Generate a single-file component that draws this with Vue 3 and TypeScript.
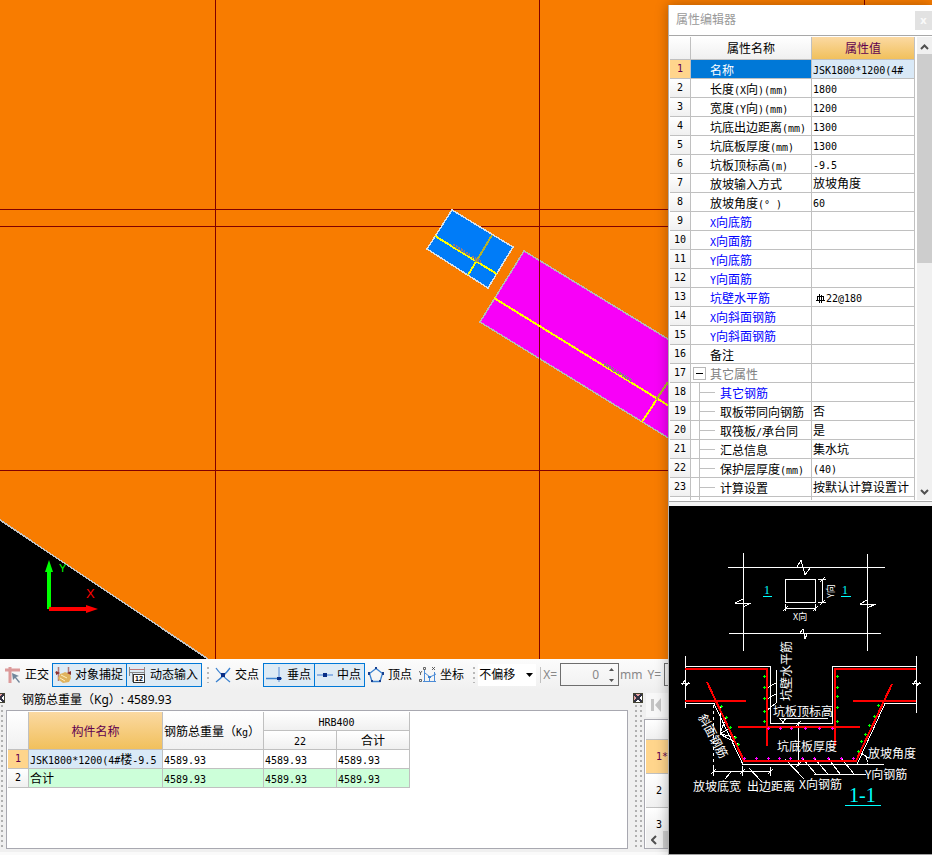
<script setup lang="ts">
import { ref } from 'vue'

type Kind = 'normal' | 'blue' | 'group' | 'child'
interface Prop { name: string; value: string; kind?: Kind; blue?: boolean; rebar?: boolean }
interface Run { text: string; mono: boolean }

const props: Prop[] = [
  { name: '名称', value: 'JSK1800*1200(4#' },
  { name: '长度(X向)(mm)', value: '1800' },
  { name: '宽度(Y向)(mm)', value: '1200' },
  { name: '坑底出边距离(mm)', value: '1300' },
  { name: '坑底板厚度(mm)', value: '1300' },
  { name: '坑板顶标高(m)', value: '-9.5' },
  { name: '放坡输入方式', value: '放坡角度' },
  { name: '放坡角度(° )', value: '60' },
  { name: 'X向底筋', value: '', blue: true },
  { name: 'X向面筋', value: '', blue: true },
  { name: 'Y向底筋', value: '', blue: true },
  { name: 'Y向面筋', value: '', blue: true },
  { name: '坑壁水平筋', value: '22@180', blue: true, rebar: true },
  { name: 'X向斜面钢筋', value: '', blue: true },
  { name: 'Y向斜面钢筋', value: '', blue: true },
  { name: '备注', value: '' },
  { name: '其它属性', value: '', kind: 'group' },
  { name: '其它钢筋', value: '', kind: 'child', blue: true },
  { name: '取板带同向钢筋', value: '否', kind: 'child' },
  { name: '取筏板/承台同', value: '是', kind: 'child' },
  { name: '汇总信息', value: '集水坑', kind: 'child' },
  { name: '保护层厚度(mm)', value: '(40)', kind: 'child' },
  { name: '计算设置', value: '按默认计算设置计', kind: 'child' },
]

// Half-width characters are set on a 6px grid next to 12px ideographs.
function runs(s: string): Run[] {
  const parts = s.match(/[\x20-\x7e°]+|[^\x20-\x7e°]+/g) ?? []
  return parts.map((text) => ({ text, mono: /^[\x20-\x7e°]/.test(text) }))
}

const snap = ref(true)
const dyn = ref(true)
const perp = ref(true)
const mid = ref(true)
const offset = ref('不偏移')
const dx = ref('0')

type Pt = [number, number]
const green: Pt[] = [
  [764, 676], [764, 687], [764, 698], [764, 711], [764, 721],
  [837, 676], [837, 687], [837, 696], [837, 707], [837, 721],
  [721, 706], [726, 717], [730, 727], [735, 737], [738, 744],
  [878, 705], [874, 716], [869, 725], [865, 734], [861, 741], [858, 751],
]
const magenta: Pt[] = [
  [768, 728], [780, 728], [791, 728], [805, 728], [819, 728], [832, 728],
  [744, 758], [756, 758], [768, 758], [779, 758], [790, 758], [802, 758],
  [814, 758], [828, 758], [841, 758], [853, 758],
]
const plus = (pts: Pt[]) => pts.map(([x, y]) => `M${x - 1} ${y + 0.5}h3M${x + 0.5} ${y - 1}v3`).join('')
</script>

<template>
  <div class="app">
    <svg class="canvas" viewBox="0 0 932 659" preserveAspectRatio="xMinYMin slice" role="img" aria-label="平面图">
      <rect width="932" height="659" fill="#f87c00" />
      <path d="M0 520L208 659H0z" fill="#000" />
      <g shape-rendering="crispEdges" fill="none">
        <path d="M0 520L208 659" stroke="#c4c4c4" stroke-width="1.5" />
        <path d="M524 251L740 383V482L480 322z" fill="#f800f8" stroke="#b8b8b8" stroke-width="1.5" />
        <path d="M0 209.500H932M0 226.500H932M0 470.500H932M215.500 0V659M539.500 0V659M864.500 0V659" stroke="#800000" />
        <path d="M452 210L513 247L488 288L427 249z" fill="#007cf8" stroke="#d8e0e8" stroke-width="1.5" />
        <path d="M435 236L497 274M492 235L468 275M494 298L700 425M668 382L642 422" stroke="#ffff00" stroke-width="2" />
        <path d="M492 235L476 262M668 382L656 400" stroke="#b0b030" stroke-width="2" />
        <path d="M453 245L470 255M472 257L481 262M604 364L632 381" stroke="#8a7a8a" stroke-width="3" stroke-dasharray="2 1" />
      </g>
      <path d="M47 609V572H45L49 560L53 572H51V609z" fill="#0f0" />
      <path d="M49 607H86V605L98 609L86 613V611H49z" fill="#f00" />
      <text class="axis" x="59" y="572" fill="#0f0">Y</text>
      <text class="axis x-axis" x="86" y="598" fill="#f00">X</text>
    </svg>

    <div class="toolbar">
      <button class="tool ortho" type="button">
        <svg width="16" height="16" viewBox="0 0 16 16"><path d="M0 3h15M5 0v16" stroke="#dc9a9a" stroke-width="3" /><path d="M7 6l7 3-3 1 4 5-1 1-4-5-2 2z" fill="#71869b" /></svg>
        <span>正交</span>
      </button>
      <button class="tool on" type="button" :aria-pressed="snap" @click="snap = !snap">
        <svg width="16" height="16" viewBox="0 0 16 16"><path d="M3.500 0v14M13.500 0v10M0 5.500h3" stroke="#b27a7a" stroke-width="1.500" /><path d="M5 7l3-1 2-1 5 2 1 4-2 4-6 1-4-3-1-2z" fill="#e0b35e" /><path d="M6 8l6 3M5 11l5 3" stroke="#fff0c0" /><path d="M1 4l4 2-4 2zM16 4l-4 2 4 2z" fill="#8b3030" /></svg>
        <span>对象捕捉</span>
      </button>
      <button class="tool on joined" type="button" :aria-pressed="dyn" @click="dyn = !dyn">
        <svg width="17" height="16" viewBox="0 0 17 16"><path d="M0 2.500h16" stroke="#c07878" fill="none" /><path d="M0 5.500h16M.5 0v9M15.500 0v8M3.500 6v9" stroke="#888" fill="none" /><rect x="4.500" y="7.500" width="11" height="8" fill="#fff" stroke="#333" /><text x="6" y="14" class="twelve">12</text></svg>
        <span>动态输入</span>
      </button>
      <i class="grip"></i>
      <button class="tool" type="button">
        <svg width="16" height="16" viewBox="0 0 16 16"><path d="M1 1q4 6 14 14M15 1Q10 8 1 15" stroke="#3b82d0" stroke-width="1.300" fill="none" /><rect x="6" y="6" width="4" height="4" fill="#0a2f86" /></svg>
        <span>交点</span>
      </button>
      <button class="tool on" type="button" :aria-pressed="perp" @click="perp = !perp">
        <svg width="17" height="16" viewBox="0 0 17 16"><path d="M13 0v15" stroke="#9bbce6" stroke-width="2" /><path d="M0 11.500h16" stroke="#3b82d0" stroke-width="1.500" /><rect x="11" y="10" width="4" height="3" fill="#0a2f86" /></svg>
        <span>垂点</span>
      </button>
      <button class="tool on joined" type="button" :aria-pressed="mid" @click="mid = !mid">
        <svg width="16" height="16" viewBox="0 0 16 16"><path d="M0 8h16" stroke="#8fb4e4" stroke-width="2" /><rect x="6" y="6" width="4" height="4" fill="#0a2f86" /></svg>
        <span>中点</span>
      </button>
      <button class="tool" type="button">
        <svg width="16" height="16" viewBox="0 0 16 16"><path d="M8 1.500L14.500 6.500L12 14.500H4L1.500 6.500z" fill="none" stroke="#3b82d0" stroke-width="1.300" /><path d="M7 0h2v2H7zM0 5h2v3H0zM14 5h2v3h-2zM3 13h2v2H3zM11 13h2v2h-2z" fill="#17408f" /></svg>
        <span>顶点</span>
      </button>
      <button class="tool" type="button">
        <svg width="17" height="16" viewBox="0 0 17 16"><path d="M5.500 3v12M4 14.500h13M6 6l5 4 6-3M10.500 9v5M15.500 5v9" stroke="#4b8bd6" fill="none" /><path d="M0 4l1.500 2L3 4M1.500 6v2M4.500 .5h2v2h-2zM13 0l3 3M16 0l-3 3M.5 12.500h2v2h-2z" stroke="#444" stroke-width=".8" fill="none" /><path d="M9 9h3v2H9z" fill="#3b82d0" /></svg>
        <span>坐标</span>
      </button>
      <i class="grip"></i>
      <label class="combo">
        <select v-model="offset" aria-label="偏移方式"><option>不偏移</option></select>
        <svg width="7" height="4" viewBox="0 0 7 4"><path d="M0 0h7L3.500 4z" /></svg>
      </label>
      <i class="sep"></i>
      <label class="axis-label" for="dx">X=</label>
      <span class="spin">
        <input id="dx" v-model="dx" type="text" />
        <svg width="5" height="16" viewBox="0 0 5 16"><path d="M0 4L2.500 1L5 4zM0 12h5L2.500 15z" fill="#555" /></svg>
      </span>
      <span class="axis-label">mm</span>
      <label class="axis-label y-label" for="dy">Y=</label>
      <span class="spin"><input id="dy" type="text" value="0" /></span>
    </div>

    <div class="dock">
      <div class="edge"><i class="pin"></i><i class="dots"></i></div>
      <section class="summary">
        <div class="total">钢筋总重量（Kg）: 4589.93</div>
        <div class="frame">
          <table class="grid weights">
            <colgroup><col class="w-no" /><col class="w-name" /><col class="w-total" /><col class="w-val" /><col class="w-val" /></colgroup>
            <thead>
              <tr><th rowspan="2"></th><th rowspan="2" class="hot">构件名称</th><th rowspan="2" class="left">钢筋总重量（<span class="mono">Kg</span>）</th><th colspan="2"><span class="mono">HRB400</span></th></tr>
              <tr><th><span class="mono">22</span></th><th>合计</th></tr>
            </thead>
            <tbody>
              <tr>
                <th class="num hot-no">1</th>
                <td class="current"><span v-for="(r, i) in runs('JSK1800*1200(4#楼-9.5')" :key="i" :class="{ mono: r.mono }">{{ r.text }}</span></td>
                <td v-for="n in 3" :key="n"><span class="mono">4589.93</span></td>
              </tr>
              <tr class="sum"><th class="num">2</th><td>合计</td><td v-for="n in 3" :key="n"><span class="mono">4589.93</span></td></tr>
            </tbody>
          </table>
        </div>
      </section>
      <div class="splitter"><i class="pin"></i><i class="dots"></i></div>
      <section class="records">
        <button class="first" type="button" aria-label="首条记录">
          <svg width="10" height="14" viewBox="0 0 10 14"><path d="M0 1h3v12H0zM10 0v14L4 7z" fill="#c4c4c4" /></svg>
        </button>
        <div class="record-frame">
          <div class="rec head"></div>
          <div class="rec active">1*</div>
          <div class="rec">2</div>
          <div class="rec last">3</div>
          <div class="hbar"><svg width="6" height="10" viewBox="0 0 6 10"><path d="M5 1L1 5L5 9" fill="none" stroke="#505050" stroke-width="2" /></svg><i></i></div>
        </div>
      </section>
    </div>

    <aside class="editor">
      <header class="title"><span>属性编辑器</span><button type="button" aria-label="关闭">x</button></header>
      <div class="prop-area">
        <div class="prop-scroll">
          <table class="grid">
            <colgroup><col class="p-no" /><col class="p-name" /><col /></colgroup>
            <thead><tr><th></th><th>属性名称</th><th class="hot">属性值</th></tr></thead>
            <tbody>
              <tr v-for="(p, i) in props" :key="i" :class="{ selected: i === 0 }">
                <th class="num" :class="{ 'hot-no': i === 0 }">{{ i + 1 }}</th>
                <td class="name" :class="[p.kind, { blue: p.blue }]">
                  <button v-if="p.kind === 'group'" class="toggle" type="button" aria-label="折叠"></button>
                  <span v-for="(r, j) in runs(p.name)" :key="j" :class="{ mono: r.mono }">{{ r.text }}</span>
                </td>
                <td class="value">
                  <svg v-if="p.rebar" class="rebar" width="9" height="9" viewBox="0 0 9 9"><path d="M3.500 0v9M5.500 1v8M1 2.500h7M1.500 2v4M7.500 2v4M0 6.500h9" fill="none" stroke="#000" shape-rendering="crispEdges" /></svg>
                  <span v-for="(r, j) in runs(p.value)" :key="j" :class="{ mono: r.mono }">{{ r.text }}</span>
                </td>
              </tr>
              <tr><th></th><td class="child"></td><td></td></tr>
            </tbody>
          </table>
        </div>
        <div class="vbar">
          <svg width="9" height="6" viewBox="0 0 9 6"><path d="M1 5L4.500 1.500L8 5" /></svg>
          <i></i>
          <svg width="9" height="6" viewBox="0 0 9 6"><path d="M1 1L4.500 4.500L8 1" /></svg>
        </div>
      </div>

      <svg class="diagram" viewBox="669 506 263 348" role="img" aria-label="集水坑参数图">
        <g shape-rendering="crispEdges" fill="none" stroke="#fff">
          <path d="M743.500 553V651M867.500 554V651M728 567.500H885M729 633.500H881" />
          <path d="M797 567L801 560L805 575L810 568M800 633L803 629L805 639L807 634" />
          <path d="M735 603.500H751M735 603L743 599V607L751 603M860 604.500H876M860 604L867 600V608L876 604" />
          <path d="M785.500 579.500H815.500V602.500H785.500zM822.500 579V603M818 579.500H826M818 602.500H826M820 582L825 577M820 605L825 600" />
          <path d="M785.500 604V611M815.500 604V611M785 608.500H816M783 611L788 606M813 611L818 606" />
          <path d="M685.500 656V708M916.500 656V713M685 666.500H770.500V723.500H832.500V666.500H916" />
          <path d="M681 683.500H690M682 685L685 680V687L689 682M912 683.500H921M913 685L916 680V687L920 682" />
          <path d="M685 703.500H714L743 764.500H884M916 703.500H885L857 764.500" />
          <path d="M713.500 705V770" stroke-dasharray="3 3" />
          <path d="M798.500 722V766M796 726L801 721M796 767L801 762M779 718.500H828M780 718L783 723L786 718" />
          <path d="M776.500 670V703M776 683L767 688M776 694L767 699M776 703L765 712" />
          <path d="M720 734L721 706M720 734L726 717M720 734L731 727M720 734L735 737M720 734L738 744" />
          <path d="M713 771.500H771M713.500 767V776M742.500 766V776M770.500 767V776M711 774L716 769M740 774L745 769M768 774L773 769M731 772L725 779M749 768L762 782" />
          <path d="M785 759L804 779M814 774.500H866M802 758L816 774M814 758L828 774M828 758L840 774M841 758L854 774" />
          <path d="M862 754Q868 756 867 764M862 754L869 758" />
        </g>
        <g shape-rendering="crispEdges" fill="none" stroke="#f00" stroke-width="2">
          <path d="M685 669H767V746M916 669H835V746M685 701H746M853 701H916M738 727H860" />
          <path d="M707 682L744 761H856L892 684" />
        </g>
        <path :d="plus(green)" stroke="#0f0" shape-rendering="crispEdges" />
        <path :d="plus(magenta)" stroke="#f0f" shape-rendering="crispEdges" />
        <g class="note">
          <text x="773" y="716">坑板顶标高</text>
          <text x="777" y="751">坑底板厚度</text>
          <text x="868" y="758">放坡角度</text>
          <text x="865" y="779">Y向钢筋</text>
          <text x="799" y="789">X向钢筋</text>
          <text x="693" y="791">放坡底宽</text>
          <text x="747" y="791">出边距离</text>
          <text transform="translate(791 701) rotate(-90)">坑壁水平筋</text>
          <text transform="translate(698 717) rotate(62)">斜面钢筋</text>
          <text class="tiny" x="793" y="620">X向</text>
          <text class="tiny" transform="translate(834 598) rotate(-90)">Y向</text>
        </g>
        <g class="mark">
          <text x="764" y="594">1</text><text x="842" y="594">1</text><text class="big" x="849" y="802">1-1</text>
          <path d="M763 596.500H772M841 596.500H851M845 805.500H881" stroke="#0ff" shape-rendering="crispEdges" />
        </g>
      </svg>
    </aside>
  </div>
</template>

<style>
body { background: #f0f0f0; }
</style>

<style scoped>
.app {
  position: relative;
  display: flex;
  flex-direction: column;
  height: 100vh;
  overflow: hidden;
  background: #f0f0f0;
  color: #000;
  font: 12px/18px "Noto Sans", "Noto Sans CJK SC", sans-serif;
}
button { font: inherit; color: inherit; margin: 0; padding: 0; border: 0; background: none; }
.canvas { display: block; width: 100%; flex: 1 1 0; min-height: 0; }
.axis { font: 11px "Liberation Sans", sans-serif; }
.x-axis { font-size: 13px; }

.toolbar {
  display: flex;
  align-items: center;
  flex: none;
  height: 31px;
  padding-left: 2px;
  overflow: hidden;
  white-space: nowrap;
  background: linear-gradient(#fcfcfc, #f0f0f0);
}
.tool {
  display: flex;
  align-items: center;
  flex: none;
  gap: 4px;
  height: 24px;
  padding: 0 3px 0 2px;
  border: 1px solid transparent;
}
.tool.ortho { padding-right: 2px; }
.tool.on { background: #deebf5; border-color: #0078d7; }
.tool.on.joined { margin-left: -1px; }
.twelve { font: bold 7px "Liberation Sans", sans-serif; }
.grip {
  flex: none;
  width: 2px;
  height: 16px;
  margin: 0 3px 0 5px;
  background: repeating-linear-gradient(#b8b8b8 0 2px, transparent 2px 5px);
}
.combo {
  position: relative;
  display: flex;
  flex: none;
  align-items: center;
  width: 58px;
  height: 22px;
  background: #fff;
}
.combo select {
  width: 100%;
  height: 100%;
  padding: 0 0 0 1px;
  border: 0;
  background: none;
  appearance: none;
  font: inherit;
}
.combo svg { position: absolute; right: 3px; top: 9px; pointer-events: none; }
.sep { flex: none; width: 1px; height: 16px; margin: 0 2px 0 4px; background: #c0c0c0; }
.axis-label { flex: none; color: #888; }
.y-label { margin-left: 5px; }
.spin {
  display: flex;
  flex: none;
  align-items: center;
  width: 53px;
  height: 21px;
  margin: 0 1px 0 3px;
  padding-right: 4px;
  border: 1px solid #6e6e6e;
}
.spin input { flex: 1; min-width: 0; padding: 0 10px 0 0; border: 0; background: none; color: #888; font: inherit; text-align: right; }

.dock { display: flex; flex: none; height: 165px; box-sizing: border-box; padding-bottom: 3px; border-bottom: 3px solid #fafafa; }
.edge { display: flex; flex-direction: column; align-items: flex-end; gap: 2px; flex: none; width: 6px; padding-top: 3px; overflow: hidden; }
.splitter { display: flex; flex-direction: column; align-items: center; gap: 2px; flex: none; width: 16px; padding: 3px 0 0 4px; box-sizing: border-box; }
.pin {
  flex: none;
  width: 8px;
  height: 8px;
  border: 1px solid #443;
  background: linear-gradient(45deg, transparent 42%, #334 42% 58%, transparent 58%), linear-gradient(-45deg, #fff 42%, #334 42% 58%, #e8a0a0 58%);
}
.dots { flex: 1; width: 7px; background: repeating-linear-gradient(transparent 0 2px, #f0f0f0 2px 5px), repeating-linear-gradient(90deg, #b0b0b0 0 2px, #f0f0f0 2px 5px); }
.edge .pin { margin-right: 1px; }
.edge .dots { margin-right: 3px; }
.summary { display: flex; flex-direction: column; flex: 1; min-width: 0; }
.total { height: 20px; padding-left: 16px; line-height: 20px; }
.frame { flex: 1; min-height: 0; padding: 1px; border: 1px solid #a8a8b0; background: #fff; box-sizing: border-box; overflow: hidden; }

.grid { border-collapse: separate; border-spacing: 0; table-layout: fixed; font-family: "Noto Sans CJK SC", sans-serif; line-height: 16px; }
.grid th, .grid td {
  height: 18px;
  padding: 0 0 0 1px;
  border-right: 1px solid #c0c0c0;
  border-bottom: 1px solid #c0c0c0;
  text-align: left;
  font-weight: normal;
  white-space: pre;
  overflow: hidden;
}
.grid th { padding: 0; text-align: center; background: linear-gradient(#fff, #f0f0f0); }
.grid th.left { padding-left: 1px; text-align: left; }
.grid th.hot { color: #600050; background: linear-gradient(#fbd9a2, #f1c05c); }
.grid th.hot-no { color: #600050; background: #ffd58c; }
.grid .num, .mono { font-family: "DejaVu Sans Mono", monospace; font-size: 10px; }
.mono { line-height: 10px; }
.grid td.current { background: #d9e9f7; }
.grid .sum td { background: #ccffd9; }
.weights { width: 402px; }
.w-no { width: 21px; }
.w-name { width: 134px; }
.w-total { width: 101px; }
.w-val { width: 73px; }

.records { display: flex; flex-direction: column; flex: none; width: 288px; }
.first { display: flex; align-items: center; flex: none; width: 60px; height: 24px; margin: 3px 0 2px 2px; padding-left: 5px; background: #f8f8f8; }
.record-frame { flex: 1; min-height: 0; overflow: hidden; display: flex; flex-direction: column; border: 1px solid #a8a8b0; padding-left: 1px; background: #fff; }
.rec {
  flex: none;
  height: 33px;
  padding-left: 10px;
  border-bottom: 1px solid #c0c0c0;
  background: linear-gradient(#fff, #f0f0f0);
  font: 10px/33px "DejaVu Sans Mono", monospace;
}
.rec.head { height: 19px; }
.rec.active { background: #ffd58c; color: #600050; }
.rec.last { flex: 1 1 0; height: auto; min-height: 0; border: 0; }
.hbar { position: relative; display: flex; align-items: center; flex: none; height: 17px; padding-left: 5px; gap: 6px; background: #f0f0f0; }
.hbar i { flex: 1; height: 100%; background: #cdcdcd; }

.editor {
  position: absolute;
  top: 5px;
  right: 0;
  bottom: 0;
  display: flex;
  flex-direction: column;
  width: 264px;
  box-sizing: border-box;
  border-left: 1px solid #b0b0b0;
  border-bottom: 1px solid #a0a0a0;
  background: #f4f4f4;
  box-shadow: 0 0 12px rgba(0, 0, 0, .3);
}
.title { display: flex; align-items: center; justify-content: space-between; flex: none; height: 30px; padding-left: 7px; background: #fff; color: #999; }
.title button { width: 17px; height: 19px; background: #e2e2e2; color: #fafafa; font: bold 11px/16px "Noto Sans", sans-serif; }
.prop-area { display: flex; flex: 1; min-height: 0; margin-bottom: 4px; padding: 1px 0 1px 1px; border: solid #a8a8a8; border-width: 1px 0; background: #fff; }
.prop-scroll { flex: 1; min-width: 0; overflow: hidden; }
.prop-scroll .grid { width: 100%; }
.grid thead tr:only-child th { height: 22px; }
.p-no { width: 21px; }
.p-name { width: 121px; }
.grid .name { position: relative; padding-left: 19px; padding-top: 1px; height: 17px; }
.grid .name.group { color: #808080; }
.grid .name.child { padding-left: 29px; }
.grid .child { position: relative; }
.blue { color: #00f; }
.grid .selected .name { background: #0078d7; color: #fff; }
.grid .selected .value { background: #d9e9f7; }
.child::before { content: ""; position: absolute; left: 8px; top: 0; bottom: -1px; width: 1px; background: #c0c0c0; }
.child::after { content: ""; position: absolute; left: 8px; top: 9px; width: 16px; height: 1px; background: #c0c0c0; }
.toggle { position: absolute; left: 2px; top: 3px; width: 13px; height: 13px; border: 1px solid #b8b8b8; background: linear-gradient(#000, #000) center / 7px 1px no-repeat #fff; }
.rebar { margin: 0 1px 0 3px; vertical-align: -1px; }
.vbar { display: flex; flex-direction: column; align-items: center; flex: none; width: 15px; margin-left: 2px; padding: 7px 0 5px; box-sizing: border-box; background: #f0f0f0; }
.vbar svg { flex: none; }
.vbar path { fill: none; stroke: #505050; stroke-width: 2; }
.vbar i { width: 100%; height: 209px; margin: 4px 0 auto; background: #cdcdcd; }
.diagram { display: block; flex: none; width: 100%; background: #000; }
.note text { fill: #fff; font: 12px "Noto Sans CJK SC", sans-serif; }
.note .tiny { font-size: 9px; }
.mark text { fill: #0ff; font: 12px "Liberation Serif", serif; }
.mark .big { font-size: 20px; }
</style>
